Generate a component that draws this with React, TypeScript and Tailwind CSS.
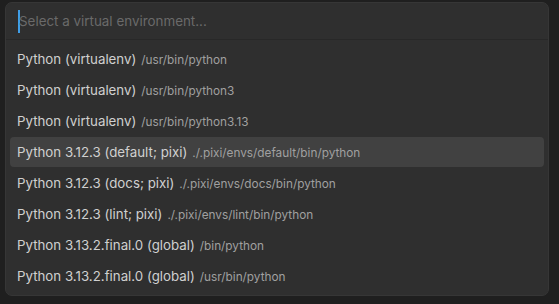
export default function App() {
  const items = [
    { name: "Python (virtualenv)", path: "/usr/bin/python" },
    { name: "Python (virtualenv)", path: "/usr/bin/python3" },
    { name: "Python (virtualenv)", path: "/usr/bin/python3.13" },
    { name: "Python 3.12.3 (default; pixi)", path: "./.pixi/envs/default/bin/python", active: true },
    { name: "Python 3.12.3 (docs; pixi)", path: "./.pixi/envs/docs/bin/python" },
    { name: "Python 3.12.3 (lint; pixi)", path: "./.pixi/envs/lint/bin/python" },
    { name: "Python 3.13.2.final.0 (global)", path: "/bin/python" },
    { name: "Python 3.13.2.final.0 (global)", path: "/usr/bin/python" },
  ];

  return (
    <div
      className="w-[559px] h-[304px] bg-[#1f1f1f] pl-[5px] pt-[2px]"
      style={{ fontFamily: "Inter, 'Noto Sans', sans-serif" }}
    >
      <div className="w-[544px] h-[294px] bg-[#2f2f2f] rounded-[7px] border border-[#363636] flex flex-col">
        {/* Search input */}
        <div className="h-[37px] flex items-center pl-[12px] border-b border-[#282828]">
          <div className="w-[2px] h-[23px] bg-[#3f9ee8]" />
          <span className="text-[13.4px] text-[#6a6a6a] -ml-[1px]">Select a virtual environment...</span>
        </div>

        {/* List */}
        <div className="flex flex-col gap-[1px] px-[4px] pt-[4px]">
          {items.map((item, i) => (
            <div
              key={i}
              className={`h-[30px] flex items-baseline pt-[6px] pl-[7px] rounded-[4px] ${item.active ? "bg-[#414141]" : ""}`}
            >
              <span className="text-[13.3px] text-[#d0d0d0]">{item.name}</span>
              <span className="text-[11.8px] text-[#a0a0a0] ml-[5px]">{item.path}</span>
            </div>
          ))}
        </div>
      </div>
    </div>
  );
}
